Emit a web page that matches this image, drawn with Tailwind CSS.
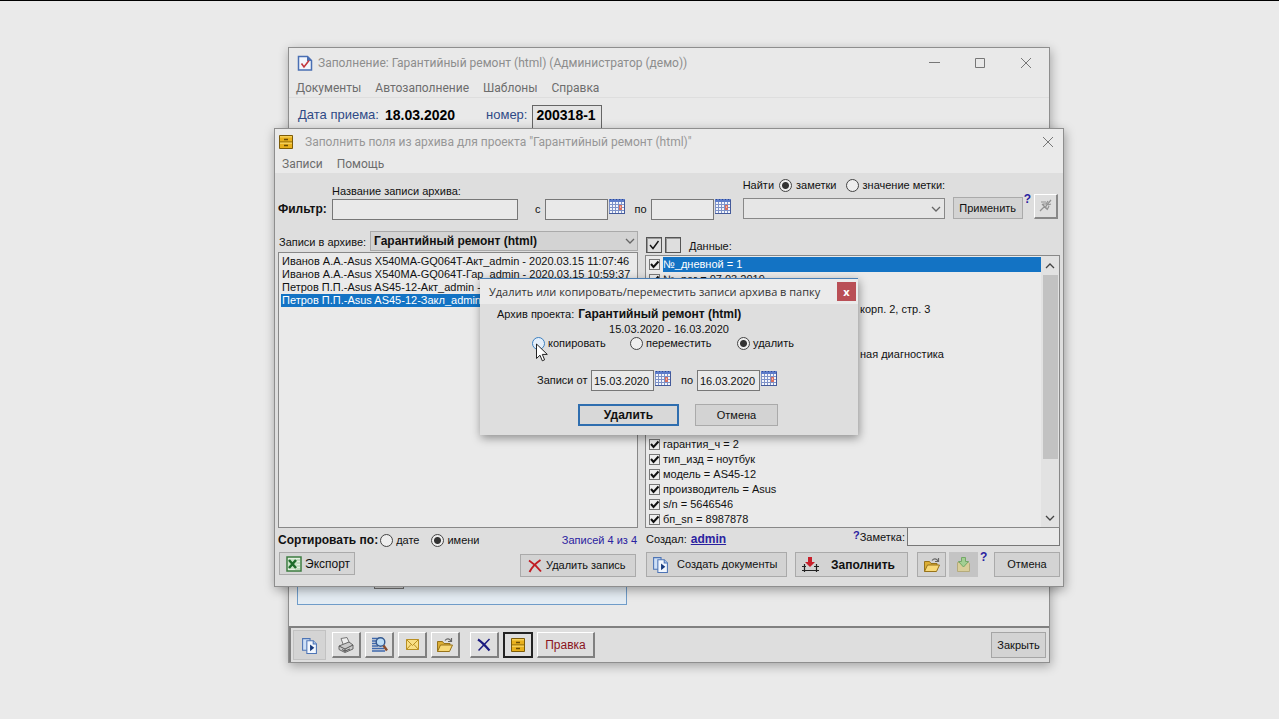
<!DOCTYPE html>
<html lang="ru">
<head>
<meta charset="utf-8">
<title>Гарантийный ремонт</title>
<script src="https://cdn.jsdelivr.net/npm/@tailwindcss/browser@4"></script>
</head>
<body class="relative min-h-screen overflow-hidden border-t border-black bg-[#eaeaea] font-['Liberation_Sans',sans-serif] text-[11px] leading-[13px] text-[#111]">

<svg class="hidden" xmlns="http://www.w3.org/2000/svg">
  <symbol id="cal" viewBox="0 0 17 16"><path fill="#f4f6fb" d="M0 0h16v15H0z"/><path fill="#5d7cc9" d="M0 0h16v3H0z"/><path stroke="#7f93c8" fill="none" d="M.5 3v12M3.500 3v12M6.500 3v12M9.500 3v12M12.500 3v12M15.500 3v12M0 5.500h16M0 8.500h16M0 11.500h16M0 14.500h16"/><path stroke="#445a9a" d="M0 14.500h16M15.500 1v14"/><path fill="#d97060" d="M10 6h3v5h-3z"/><path fill="#f0b8ac" d="M11 7h1v2h-1z"/><path stroke="#2f4a94" d="M1 .5h14" stroke-dasharray="1 2"/></symbol>
  <symbol id="tick" viewBox="0 0 11 11"><path fill="none" stroke="#111" stroke-width="2" d="M2 5l2.500 3L9.500 2.500"/></symbol>
  <symbol id="cabinet" viewBox="0 0 16 16"><path fill="#e8b01c" stroke="#7d5c08" d="M1.500 1.500h13v13h-13zM1.500 8h13"/><path fill="#f6cf55" d="M2 2h12v1.500H2zM2 8.500h12V10H2z"/><path stroke="#6b4d05" stroke-width="1.300" d="M6 5.500h4M6 11.500h4"/></symbol>
  <symbol id="docs" viewBox="0 0 16 16"><path fill="#cfe0f6" stroke="#4d74b5" d="M1.500 1.500h7v11h-7z"/><path fill="#f2f7fe" stroke="#4d74b5" d="M5.500 3.500h6l3 3v9h-9z"/><path fill="#a9c5ec" stroke="#4d74b5" d="M11.500 3.500v3h3"/><path fill="#173a7d" d="M8.500 7l4 3.200-4 3.200z"/></symbol>
  <symbol id="folder" viewBox="0 0 18 16"><path fill="#dcae35" stroke="#97731a" d="M1.500 14.500v-10h5l1.500 2h6v3"/><path fill="#f8d977" stroke="#97731a" d="M1.500 14.500l3-6.500h12l-3 6.500z"/><path fill="none" stroke="#666" stroke-width="1.200" d="M9 3.500c2-2.500 4.500-2 6 .5M15.500 1v3.500H12"/></symbol>
  <symbol id="close" viewBox="0 0 12 12"><path stroke="#777" fill="none" d="M1 1l10 10M11 1L1 11"/></symbol>
  <symbol id="chevdown" viewBox="0 0 10 10"><path fill="none" stroke="currentColor" stroke-width="1.300" d="M1 3l4 4 4-4"/></symbol>
</svg>

<!-- Main window -->
<section class="absolute left-[288px] top-[46px] flex h-[616px] w-[762px] flex-col border border-[#8e8e8e] bg-[#e9e9e9] shadow-[1px_3px_10px_rgba(0,0,0,.3)]">
  <header class="flex h-[30px] shrink-0 items-center pl-2 pr-[17px] font-['Roboto','Noto_Sans',sans-serif] text-xs text-[#8d8d8d]">
    <svg class="mr-[5px] size-4" viewBox="0 0 16 16"><path fill="#f3f6fc" stroke="#4a6fb3" stroke-width="1.500" d="M1.500 1.500h9l4 4v9.500h-13z"/><path fill="#4a6fb3" d="M10 1l5 5h-5z"/><path fill="none" stroke="#c3373d" stroke-width="1.600" d="M4.500 8.500L7 12l5-6.500"/></svg>
    <h1 class="flex-1">Заполнение: Гарантийный ремонт (html) (Администратор (демо))</h1>
    <div class="flex items-center gap-[34px]">
      <button aria-label="Свернуть"><svg class="size-3" viewBox="0 0 12 12"><path stroke="#777" d="M1 5.500h11"/></svg></button>
      <button aria-label="Развернуть"><svg class="size-3" viewBox="0 0 12 12"><path fill="none" stroke="#777" d="M1.500 1.500h9v9h-9z"/></svg></button>
      <button aria-label="Закрыть окно"><svg class="size-3"><use href="#close"/></svg></button>
    </div>
  </header>
  <nav class="flex h-5 shrink-0 items-center gap-[14px] border-b border-[#dedede] pl-[7px] font-['Roboto','Noto_Sans',sans-serif] text-xs text-[#6d6d6d]">
    <button>Документы</button><button>Автозаполнение</button><button>Шаблоны</button><button>Справка</button>
  </nav>
  <div class="flex min-h-0 flex-1 flex-col justify-between">
    <div class="flex items-start pl-[9px] pt-[7px] text-[13px] leading-5 text-[#2f4a86]">
      <span>Дата приема:</span><b class="ml-[6px] text-sm leading-5 text-black">18.03.2020</b>
      <label class="ml-[31px]" for="num">номер:</label>
      <input id="num" value="200318-1" class="ml-[5px] h-[25px] w-[70px] border border-[#666] bg-[#e4e4e4] px-[3px] pb-[6px] text-sm font-bold text-black">
    </div>
    <div class="mb-[21px] ml-2 h-[60px] w-[330px] border border-[#6f9cc9] bg-[#e4ecf3] pl-[76px] pt-10">
      <div class="-mt-[15px] h-[18px] w-[30px] border border-[#777] bg-[#ddd]"></div>
    </div>
  </div>
  <footer class="flex h-9 shrink-0 items-center border-l-2 border-t-2 border-[#808080] bg-[#dedede] pl-[2px] pr-[3px]">
    <button aria-label="Создать" class="flex h-[30px] w-[33px] items-center justify-center border border-[#c2c2c2] bg-[#d4d4d4]"><svg class="size-[17px]"><use href="#docs"/></svg></button>
    <div class="ml-[6px] flex gap-1">
      <button aria-label="Печать" class="flex h-[26px] w-[29px] items-center justify-center border border-b-2 border-r-2 border-[#808080] border-l-white border-t-white"><svg class="size-4" viewBox="0 0 16 16"><path fill="#eee" stroke="#777" d="M5 7L3 1.500l6-1L11.500 6"/><path fill="#c9c9c9" stroke="#666" d="M1 9l10-4 4 3v4l-8 3.500-6-3z"/><path stroke="#555" fill="none" d="M1 9l6 3 8-4M7 12v3M4 12.500l3 1.500 5-2"/></svg></button>
      <button aria-label="Просмотр" class="flex h-[26px] w-[29px] items-center justify-center border border-b-2 border-r-2 border-[#808080] border-l-white border-t-white"><svg class="size-[17px]" viewBox="0 0 17 17"><path stroke="#3e68ad" stroke-width="1.300" d="M1 2.500h8M1 5h6M1 7.500h6M1 10h6M1 12.500h12M1 15h13"/><circle cx="9.500" cy="6" r="4.300" fill="#bcdcf5" stroke="#34588f" stroke-width="1.400"/><path stroke="#8a4c2c" stroke-width="2.400" d="M12.500 9.500l3.500 5"/></svg></button>
      <button aria-label="Почта" class="flex h-[26px] w-[29px] items-center justify-center border border-b-2 border-r-2 border-[#808080] border-l-white border-t-white"><svg class="size-[15px]" viewBox="0 0 15 15"><path fill="#f9df85" stroke="#b98f22" d="M1.500 2.500h12v10h-12z"/><path fill="none" stroke="#b98f22" d="M1.500 2.500l6 6 6-6M1.500 12.500l4.500-5M13.500 12.500L9 7.500"/></svg></button>
      <button aria-label="Открыть" class="flex h-[26px] w-[29px] items-center justify-center border border-b-2 border-r-2 border-[#808080] border-l-white border-t-white"><svg class="h-4 w-[18px]"><use href="#folder"/></svg></button>
    </div>
    <button aria-label="Удалить" class="ml-[10px] flex h-[26px] w-[29px] items-center justify-center border border-b-2 border-r-2 border-[#808080] border-l-white border-t-white"><svg class="size-[14px]" viewBox="0 0 14 14"><path stroke="#1a1a80" stroke-width="2.200" fill="none" d="M1 1.500c4 2.500 8 7 11.500 11"/><path stroke="#1a1a80" stroke-width="1.500" d="M12.500 1L1.500 12.500"/></svg></button>
    <button aria-label="Архив" class="ml-1 flex h-[26px] w-[30px] items-center justify-center border-2 border-[#222]"><svg class="size-4"><use href="#cabinet"/></svg></button>
    <button class="ml-1 h-[26px] w-[58px] border border-b-2 border-r-2 border-[#808080] border-l-white border-t-white text-xs text-[#8a1420]">Правка</button>
    <button class="ml-auto h-[26px] w-[55px] border border-[#a5a5a5] bg-[#d3d3d3]">Закрыть</button>
  </footer>
</section>

<!-- Archive window -->
<section class="absolute left-[274px] top-[127px] flex h-[459px] w-[790px] flex-col border border-[#8e8e8e] bg-[#dedede] shadow-[1px_3px_10px_rgba(0,0,0,.35)]">
  <header class="flex h-[25px] shrink-0 items-center bg-[#eaeaea] pl-[3px] pr-[9px] font-['Roboto','Noto_Sans',sans-serif] text-xs text-[#979797]">
    <svg class="mr-[11px] size-4"><use href="#cabinet"/></svg>
    <h2 class="flex-1">Заполнить поля из архива для проекта "Гарантийный ремонт (html)"</h2>
    <button aria-label="Закрыть архив"><svg class="size-3"><use href="#close"/></svg></button>
  </header>
  <nav class="flex h-[19px] shrink-0 items-center gap-[14px] bg-[#eaeaea] pl-[7px] font-['Roboto','Noto_Sans',sans-serif] text-xs text-[#6d6d6d]">
    <button>Записи</button><button>Помощь</button>
  </nav>

  <form class="flex h-[47px] shrink-0 items-end pl-[3px] pr-[5px]">
    <b class="w-[54px] pb-[3px] text-xs leading-[15px]">Фильтр:</b>
    <div><label for="name" class="block pb-[1px]">Название записи архива:</label><input id="name" class="block h-[21px] w-[186px] border border-[#777] bg-[#e9e9e9]"></div>
    <label for="from" class="ml-[17px] pb-1">с</label><input id="from" class="ml-1 h-[21px] w-[63px] border border-[#777] bg-[#e9e9e9]">
    <button type="button" aria-label="Календарь с" class="mb-[5px] ml-[1px]"><svg class="h-4 w-[17px]"><use href="#cal"/></svg></button>
    <label for="to" class="ml-[9px] pb-1">по</label><input id="to" class="ml-1 h-[21px] w-[63px] border border-[#777] bg-[#e9e9e9]">
    <button type="button" aria-label="Календарь по" class="mb-[5px] ml-[1px]"><svg class="h-4 w-[17px]"><use href="#cal"/></svg></button>
    <div class="ml-auto w-[202px]">
      <div class="mb-[6px] flex items-center whitespace-nowrap"><span>Найти</span>
        <label class="ml-[5px] flex items-center gap-1"><input type="radio" name="find" checked class="size-[13px] appearance-none rounded-full border border-[#444] bg-[#eee] checked:bg-[radial-gradient(circle,#333_0_3px,#eee_4px)]">заметки</label>
        <label class="ml-[9px] flex items-center gap-1"><input type="radio" name="find" class="size-[13px] appearance-none rounded-full border border-[#444] bg-[#eee]">значение метки:</label>
      </div>
      <div class="relative mb-[1px]"><select aria-label="Что найти" class="block h-[21px] w-full appearance-none border border-[#888] bg-[#e6e6e6]"><option></option></select><svg class="pointer-events-none absolute right-1 top-[6px] size-[10px] text-[#666]"><use href="#chevdown"/></svg></div>
    </div>
    <button type="button" class="mb-[1px] ml-2 h-[22px] w-[70px] border border-[#aaa] bg-[#d3d3d3]">Применить</button>
    <a href="#" class="mb-[14px] ml-[1px] text-xs font-bold leading-[13px] text-[#2a22a0]">?</a>
    <button type="button" aria-label="Закрепить" class="mb-[1px] ml-[3px] flex h-[25px] w-6 items-center justify-center border border-b-2 border-r-2 border-[#888] border-l-white border-t-white"><svg class="size-[14px]" viewBox="0 0 14 14"><path fill="none" stroke="#929292" stroke-width="1.200" d="M1 12l5-5M3 5l5 5M4 5h3l2-3M7 10V7l5-6M2 3h5M9 6l3-1M8 11l2-4"/></svg></button>
  </form>

  <div class="grid min-h-0 flex-1 grid-cols-[360fr_415fr] gap-x-[7px] pl-[3px] pr-[3px]">
    <div class="flex flex-col pt-[11px]">
      <div class="flex h-[20px] items-center"><label for="arch" class="w-[92px] pl-[1px] pt-[2px]">Записи в архиве:</label>
        <div class="relative flex-1"><select id="arch" class="block h-5 w-full appearance-none border border-[#aaa] bg-[#d3d3d3] px-[3px] text-xs font-bold"><option>Гарантийный ремонт (html)</option></select><svg class="pointer-events-none absolute right-[3px] top-[5px] size-[10px] text-[#666]"><use href="#chevdown"/></svg></div>
      </div>
      <ul class="mt-[1px] h-[276px] overflow-hidden whitespace-nowrap border border-[#888] bg-[#eaeaea] px-[3px] py-[2px]">
        <li>Иванов А.А.-Asus X540MA-GQ064T-Акт_admin - 2020.03.15 11:07:46</li>
        <li>Иванов А.А.-Asus X540MA-GQ064T-Гар_admin - 2020.03.15 10:59:37</li>
        <li>Петров П.П.-Asus AS45-12-Акт_admin -</li>
        <li class="-mx-[1px] bg-[#1373c4] px-[1px] text-white">Петров П.П.-Asus AS45-12-Закл_admin</li>
      </ul>
      <div class="mt-[5px] flex items-center"><b class="text-xs leading-[14px]">Сортировать по:</b>
        <label class="ml-[2px] flex items-center gap-[3px]"><input type="radio" name="sort" class="size-[13px] appearance-none rounded-full border border-[#444] bg-[#eee]">дате</label>
        <label class="ml-3 flex items-center gap-[3px]"><input type="radio" name="sort" checked class="size-[13px] appearance-none rounded-full border border-[#444] bg-[#eee] checked:bg-[radial-gradient(circle,#333_0_3px,#eee_4px)]">имени</label>
        <span class="ml-auto pr-[1px] text-[#2a22a0]">Записей 4 из 4</span>
      </div>
      <div class="mt-[5px] flex items-start justify-between pl-[1px] pr-[2px]">
        <button class="flex h-[23px] w-[76px] items-center gap-[3px] border border-[#aaa] bg-[#d6d6d6] pl-[6px] text-xs"><svg class="size-4" viewBox="0 0 16 16"><path fill="#e4f0e2" stroke="#3c7c40" stroke-width="1.500" d="M1 1h14v14H1z"/><path stroke="#9fc29d" d="M9 4h5M9 7h5M9 10h5M9 13h5"/><path fill="#cbe3c8" d="M2 3h9v10H2z"/><path stroke="#1f6c2b" stroke-width="2.500" d="M3 4l7 8M10 4l-7 8"/></svg>Экспорт</button>
        <button class="mt-[2px] flex h-[23px] w-[116px] items-center gap-1 border border-[#aaa] bg-[#d3d3d3] pl-[7px]"><svg class="size-[14px]" viewBox="0 0 14 14"><path fill="none" stroke="#c11d24" stroke-width="1.900" d="M1 1.500c4 2.500 8 6 12 11M12.500 1C8 4 4 8 1.500 13"/></svg>Удалить запись</button>
      </div>
    </div>

    <div class="flex flex-col pt-[17px]">
      <div class="flex items-center gap-[3px] pl-[1px]">
        <button aria-label="Отметить все" class="size-4 border border-[#555] p-[1px] shadow-[inset_1px_1px_0_#999]"><svg class="size-[12px]" viewBox="0 0 12 12"><path fill="none" stroke="#111" stroke-width="1.400" d="M2 6l3 3.500L10.500 2"/></svg></button>
        <button aria-label="Снять отметки" class="size-4 border border-[#555] shadow-[inset_1px_1px_0_#999]"></button>
        <span class="ml-[5px] pt-[2px]">Данные:</span>
      </div>
      <div class="mt-[2px] flex h-[273px] border border-[#888] bg-[#eaeaea]">
        <ul id="data" class="min-w-0 flex-1 overflow-hidden whitespace-nowrap pl-[3px] pt-[1px]"></ul>
        <div class="flex w-[18px] flex-col items-center bg-[#e2e2e2] text-[#444]">
          <svg class="mb-1 mt-[5px] size-[10px] shrink-0 rotate-180"><use href="#chevdown"/></svg>
          <div class="h-[184px] w-[15px] bg-[#c2c2c2]"></div>
          <svg class="mb-1 mt-auto size-[10px]"><use href="#chevdown"/></svg>
        </div>
      </div>
      <div class="flex h-[18px] items-center">
        <span class="pl-[1px] pt-1">Создал:</span><a href="#" class="ml-1 pt-1 text-xs font-bold leading-[13px] text-[#2a22a0] underline">admin</a>
        <a href="#" class="ml-auto pb-1 font-bold text-[#2a22a0]">?</a><label for="note" class="mr-[2px]">Заметка:</label><input id="note" class="h-[18px] w-[153px] border border-t-0 border-[#777] bg-[#e9e9e9]">
      </div>
      <div class="mt-[6px] flex items-start pl-[1px]">
        <button class="flex h-[25px] w-[141px] items-center gap-2 border border-[#aaa] bg-[#d3d3d3] pl-[5px]"><svg class="size-[17px]"><use href="#docs"/></svg>Создать документы</button>
        <button class="ml-2 flex h-[25px] w-[113px] items-center gap-3 border border-[#aaa] bg-[#d3d3d3] pl-[6px] text-xs font-bold"><svg class="size-[17px]" viewBox="0 0 17 17"><path fill="#c81f2b" d="M6 1h4v5h3l-5 5-5-5h3z"/><path stroke="#222" stroke-width="1.200" fill="none" d="M0 10.500h4M12 10.500h5M2.500 8v8M14.500 8v8M0 14.500h17"/></svg>Заполнить</button>
        <button aria-label="Открыть папку" class="ml-[9px] flex h-[25px] w-[29px] items-center justify-center border border-[#aaa] bg-[#d3d3d3]"><svg class="h-4 w-[18px]"><use href="#folder"/></svg></button>
        <button aria-label="Сохранить" disabled class="ml-[3px] flex h-[25px] w-[29px] items-center justify-center bg-[#c4c4c4]"><svg class="size-[17px]" viewBox="0 0 17 17"><path fill="#d9ce9a" stroke="#b5ab7c" d="M2.500 6.500h11l1 1v8h-12z"/><path fill="#a3cf93" stroke="#74a867" d="M6.500 1.500h4v4h3l-5 5.500-5-5.500h3z"/></svg></button>
        <a href="#" class="ml-[2px] text-xs font-bold leading-[10px] text-[#2a22a0]">?</a>
        <button class="ml-auto h-[25px] w-[66px] border border-[#aaa] bg-[#d3d3d3]">Отмена</button>
      </div>
    </div>
  </div>
</section>

<!-- Delete / copy / move dialog -->
<section class="absolute left-[480px] top-[277px] flex h-[157px] w-[378px] flex-col border-t border-[#4a7fb5] bg-[#dedede] shadow-[1px_3px_9px_rgba(0,0,0,.4)]">
  <header class="flex h-[25px] shrink-0 items-center bg-[#ebebeb] pl-[9px] pr-[2px] font-['Open_Sans','Noto_Sans',sans-serif] text-[11px] text-[#333]">
    <h2 class="flex-1 whitespace-nowrap">Удалить или копировать/переместить записи архива в папку</h2>
    <button aria-label="Закрыть диалог" class="size-[19px] shrink-0 bg-[#b94f56] text-[11px] font-bold leading-[15px] text-white">x</button>
  </header>
  <form class="flex flex-col">
    <div class="flex items-baseline gap-1 pl-[17px] pt-[3px]"><span>Архив проекта:</span><b class="text-xs leading-[15px]">Гарантийный ремонт (html)</b></div>
    <div class="pt-[1px] text-center">15.03.2020 - 16.03.2020</div>
    <div class="mt-[1px] flex items-center pl-[52px]">
      <label class="flex w-[98px] items-center gap-[3px]"><input type="radio" name="act" class="size-[13px] appearance-none rounded-full border border-[#3b7fc0] bg-[#e3eefa]">копировать</label>
      <label class="flex w-[107px] items-center gap-[3px]"><input type="radio" name="act" class="size-[13px] appearance-none rounded-full border border-[#444] bg-[#eee]">переместить</label>
      <label class="flex items-center gap-[3px]"><input type="radio" name="act" checked class="size-[13px] appearance-none rounded-full border border-[#444] bg-[#eee] checked:bg-[radial-gradient(circle,#333_0_3px,#eee_4px)]">удалить</label>
    </div>
    <div class="mt-5 flex items-center pl-[57px]">
      <label for="d1" class="w-[54px]">Записи от</label><input id="d1" value="15.03.2020" class="h-[21px] w-[63px] border border-[#777] bg-[#e9e9e9] px-[2px]">
      <button type="button" aria-label="Календарь от" class="mb-1 ml-[1px]"><svg class="h-4 w-[17px]"><use href="#cal"/></svg></button>
      <label for="d2" class="ml-[9px] w-4">по</label><input id="d2" value="16.03.2020" class="h-[21px] w-[63px] border border-[#777] bg-[#e9e9e9] px-[2px]">
      <button type="button" aria-label="Календарь до" class="mb-1 ml-[1px]"><svg class="h-4 w-[17px]"><use href="#cal"/></svg></button>
    </div>
    <div class="mt-[13px] flex gap-4 pl-[98px]">
      <button type="button" class="h-[22px] w-[101px] border-2 border-[#2f6eaf] bg-[#d8d8d8] text-xs font-bold">Удалить</button>
      <button type="button" class="h-[22px] w-[83px] border border-[#aaa] bg-[#d3d3d3]">Отмена</button>
    </div>
  </form>
</section>

<!-- Mouse pointer -->
<svg class="pointer-events-none absolute left-[536px] top-[342px] h-[19px] w-3" viewBox="0 0 12 19"><path fill="#fff" stroke="#222" d="M.5 1v14.500l3.500-3.300 2.300 5.600 2.300-1-2.300-5.400h5z"/></svg>

<script>
  const rows = [
    ['№_дневной = 1'], ['№_рег = 07.03.2019'], [''], ['корп. 2, стр. 3', 1], [''], [''], ['ная диагностика', 1],
    [''], [''], [''], [''], [''], ['гарантия_ч = 2'], ['тип_изд = ноутбук'], ['модель = AS45-12'],
    ['производитель = Asus'], ['s/n = 5646546'], ['бп_sn = 8987878']
  ];
  document.getElementById('data').innerHTML = rows.map(([t, tail], i) =>
    `<li><label class="flex h-[15px] items-center"><span class="relative mr-[3px] size-[11px] shrink-0"><input type="checkbox" checked class="block size-[11px] appearance-none border border-[#777] bg-[#eee]"><svg class="pointer-events-none absolute inset-0 size-[11px]"><use href="#tick"/></svg></span><span class="${i === 0 ? 'flex-1 bg-[#1373c4] leading-[15px] text-white' : tail ? 'pl-[197px]' : ''}">${t}</span></label></li>`).join('');
</script>
</body>
</html>
